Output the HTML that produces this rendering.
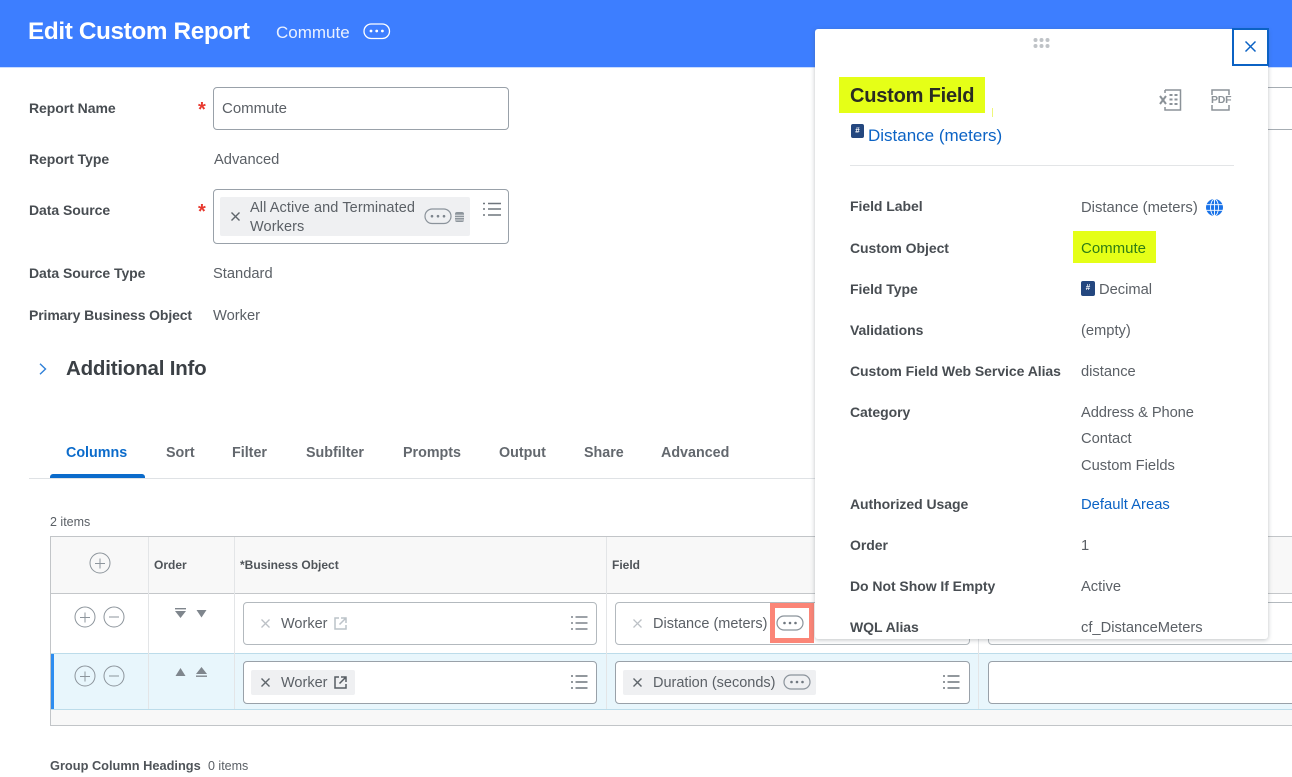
<!DOCTYPE html>
<html><head><meta charset="utf-8"><style>
html,body{margin:0;padding:0;background:#fff}
#p{position:relative;width:1292px;height:777px;overflow:hidden;background:#fff;font-family:"Liberation Sans",sans-serif;color:#555a60;font-size:15px;filter:blur(.3px)}
.t{position:absolute;white-space:nowrap;line-height:20px;height:20px;margin-top:1px}
.l{font-weight:700;color:#484d52;font-size:14px;letter-spacing:-.05px}
.v{color:#5b6066;font-size:14.700px;margin-top:2px}
.b{position:absolute;box-sizing:border-box;background:#fff;border:1.500px solid #99a1a9;border-radius:4px}
.a{position:absolute;box-sizing:border-box}
svg{position:absolute;overflow:visible}
.th{font-weight:700;font-size:12px;color:#4f5459}
.tab{font-weight:700;font-size:14.300px;color:#63686e}
</style></head><body><div id="p">

<div class="a" style="left:0;top:0;width:1292px;height:68px;background:#3d7eff;border-bottom:1px solid #c9dcff"></div>
<div class="t" style="left:28px;top:31px;margin-top:-9px;font-size:24.300px;font-weight:700;color:#fff;letter-spacing:-.36px">Edit Custom Report</div>
<div class="t" style="left:276px;top:22px;font-size:17px;color:#eaf1ff">Commute</div>
<svg style="left:363px;top:23px" width="28" height="17" fill="none"><rect x="1" y="1" width="25.500" height="14.500" rx="7.200" stroke="#fff" stroke-width="1.300"/><circle cx="8" cy="8" r="1.400" fill="#fff"/><circle cx="13.700" cy="8" r="1.400" fill="#fff"/><circle cx="19.400" cy="8" r="1.400" fill="#fff"/></svg>

<div class="t l" style="left:29px;top:97px">Report Name</div>
<div class="t" style="left:198px;top:99px;color:#e8392f;font-size:20px;font-weight:700">*</div>
<div class="b" style="left:213px;top:87px;width:296px;height:43px"></div>
<div class="t v" style="left:222px;top:98px;font-size:15px;margin-top:1px">Commute</div>
<div class="t l" style="left:29px;top:148px">Report Type</div>
<div class="t v" style="left:214px;top:149px;margin-top:1px">Advanced</div>

<div class="t l" style="left:29px;top:199px">Data Source</div>
<div class="t" style="left:198px;top:201px;color:#e8392f;font-size:20px;font-weight:700">*</div>
<div class="b" style="left:213px;top:189px;width:296px;height:55px"></div>
<div class="a" style="left:220px;top:197px;width:250px;height:39px;background:#eff0f2;border-radius:2px"></div>
<svg style="left:231px;top:212px" width="9" height="9" stroke="#5f656b" stroke-width="1.400"><path d="M.5.5l8 8M8.500.5l-8 8"/></svg>
<div class="t v" style="left:250px;top:196px;font-size:14.500px;letter-spacing:.1px">All Active and Terminated</div>
<div class="t v" style="left:250px;top:215px;font-size:14.500px;letter-spacing:.1px">Workers</div>
<svg style="left:424px;top:208px" width="28" height="17" fill="none"><rect x="1" y="1" width="26" height="14.500" rx="7.200" stroke="#8b939b" stroke-width="1.200"/><circle cx="8" cy="8.200" r="1.300" fill="#7c848c"/><circle cx="14" cy="8.200" r="1.300" fill="#7c848c"/><circle cx="20" cy="8.200" r="1.300" fill="#7c848c"/></svg>
<svg style="left:455px;top:212px" width="9" height="10"><rect width="9" height="10" rx="2" fill="#8d959c"/><path d="M0 3.200h9M0 5.600h9M0 8h9" stroke="#eff0f2" stroke-width=".8"/></svg>
<svg style="left:483px;top:202px" width="18" height="15" stroke="#6f767d" stroke-width="1.500"><path d="M5 1.500h13M5 7h13M5 13h13M0 1.500h2M0 7h2M0 13h2"/></svg>

<div class="t l" style="left:29px;top:262px">Data Source Type</div>
<div class="t v" style="left:213px;top:263px;margin-top:1px">Standard</div>
<div class="t l" style="left:29px;top:304px;letter-spacing:-.12px">Primary Business Object</div>
<div class="t v" style="left:213px;top:304px">Worker</div>

<svg style="left:39px;top:363px" width="8" height="12" fill="none" stroke="#2f80d8" stroke-width="1.400"><path d="M1 .8L6.500 6 1 11.200"/></svg>
<div class="t" style="left:66px;top:358px;font-size:20.500px;font-weight:700;color:#3b4045;letter-spacing:-.2px">Additional Info</div>

<div class="t tab" style="left:66px;top:442px;color:#0b6bcb">Columns</div>
<div class="t tab" style="left:166px;top:442px">Sort</div>
<div class="t tab" style="left:232px;top:442px">Filter</div>
<div class="t tab" style="left:306px;top:442px">Subfilter</div>
<div class="t tab" style="left:403px;top:442px">Prompts</div>
<div class="t tab" style="left:499px;top:442px">Output</div>
<div class="t tab" style="left:584px;top:442px">Share</div>
<div class="t tab" style="left:661px;top:442px">Advanced</div>
<div class="a" style="left:29px;top:478px;width:790px;height:1px;background:#dfe2e5"></div>
<div class="a" style="left:50px;top:474px;width:95px;height:4px;background:#0b6bcb;border-radius:3px 3px 0 0"></div>

<div class="t" style="left:50px;top:511px;font-size:12.500px;color:#5b6066">2 items</div>

<!-- table -->
<div class="a" style="left:50px;top:536px;width:1250px;height:190px;background:#f8f8f8;border:1px solid #c2c5c8;border-right:0"></div>
<div class="a" style="left:51px;top:593px;width:1241px;height:1px;background:#c4c7ca"></div>
<div class="a" style="left:51px;top:594px;width:1241px;height:60px;background:#fff"></div>
<div class="a" style="left:51px;top:653px;width:1241px;height:57px;background:#e8f6fc;border-top:1px solid #bcdcea;border-bottom:1px solid #bcdcea"></div>
<div class="a" style="left:51px;top:654px;width:3px;height:55px;background:#2d8df0"></div>
<div class="a" style="left:148px;top:537px;width:1px;height:172px;background:#e3e5e7"></div>
<div class="a" style="left:234px;top:537px;width:1px;height:172px;background:#e3e5e7"></div>
<div class="a" style="left:606px;top:537px;width:1px;height:172px;background:#e3e5e7"></div>
<div class="a" style="left:978px;top:594px;width:1px;height:115px;background:#e3e5e7"></div>

<div class="t th" style="left:154px;top:554px">Order</div>
<div class="t th" style="left:240px;top:554px">*Business Object</div>
<div class="t th" style="left:612px;top:554px">Field</div>

<svg style="left:89px;top:552px" width="22" height="22" fill="none" stroke="#8d959c" stroke-width="1"><circle cx="11" cy="11" r="10"/><path d="M11 6.500v10M6 11.500h10"/></svg>
<svg style="left:74px;top:606px" width="22" height="22" fill="none" stroke="#8d959c" stroke-width="1"><circle cx="11" cy="11" r="10"/><path d="M11 6.500v10M6 11.500h10"/></svg>
<svg style="left:103px;top:606px" width="22" height="22" fill="none" stroke="#8d959c" stroke-width="1"><circle cx="11" cy="11" r="10"/><path d="M6 11h10"/></svg>
<svg style="left:74px;top:665px" width="22" height="22" fill="none" stroke="#8d959c" stroke-width="1"><circle cx="11" cy="11" r="10"/><path d="M11 6.500v10M6 11.500h10"/></svg>
<svg style="left:103px;top:665px" width="22" height="22" fill="none" stroke="#8d959c" stroke-width="1"><circle cx="11" cy="11" r="10"/><path d="M6 11h10"/></svg>

<svg style="left:175px;top:608px" width="12" height="12" fill="#7f868d"><rect width="11" height="1.400"/><path d="M0 3h11L5.500 10z"/></svg>
<svg style="left:196px;top:609px" width="12" height="10" fill="#7f868d"><path d="M.5 1h10L5.500 8.500z"/></svg>
<svg style="left:175px;top:667px" width="12" height="10" fill="#7f868d"><path d="M.5 9h10L5.500 1z"/></svg>
<svg style="left:196px;top:666px" width="12" height="12" fill="#7f868d"><path d="M0 8h11L5.500 1z"/><rect y="9.500" width="11" height="1.400"/></svg>

<!-- row 1 inputs -->
<div class="b" style="left:243px;top:602px;width:354px;height:43px;border-color:#b3b9be"></div>
<svg style="left:261px;top:619px" width="9" height="9" stroke="#bcc1c6" stroke-width="1.300"><path d="M.5.5l8 8M8.500.5l-8 8"/></svg>
<div class="t v" style="left:281px;top:612px;font-size:14.500px">Worker</div>
<svg style="left:334px;top:617px" width="13" height="13" fill="none" stroke="#bcc3c9" stroke-width="1.500"><path d="M5 1H1v11h11V8M7 1h5v5M12 1L5.500 7.500"/></svg>
<svg style="left:571px;top:616px" width="17" height="14" stroke="#7d848b" stroke-width="1.400"><path d="M4.500 1h12M4.500 7h12M4.500 13h12M0 1h2M0 7h2M0 13h2"/></svg>

<div class="b" style="left:615px;top:602px;width:355px;height:43px;border-color:#b3b9be"></div>
<svg style="left:633px;top:619px" width="9" height="9" stroke="#bcc1c6" stroke-width="1.300"><path d="M.5.5l8 8M8.500.5l-8 8"/></svg>
<div class="t v" style="left:653px;top:612px;font-size:14.500px">Distance (meters)</div>
<div class="a" style="left:770px;top:603px;width:44px;height:40px;border:5px solid #fb8577;background:#fff"></div>
<svg style="left:776px;top:615px" width="28" height="17" fill="none"><rect x="1" y="1" width="26" height="14" rx="7" stroke="#8b939b" stroke-width="1.200"/><circle cx="8.500" cy="8" r="1.300" fill="#6f777f"/><circle cx="14" cy="8" r="1.300" fill="#6f777f"/><circle cx="19.500" cy="8" r="1.300" fill="#6f777f"/></svg>

<div class="b" style="left:988px;top:602px;width:320px;height:43px;border-color:#b3b9be"></div>

<!-- row 2 inputs -->
<div class="b" style="left:243px;top:661px;width:354px;height:43px"></div>
<div class="a" style="left:251px;top:670px;width:104px;height:25px;background:#eff0f2;border-radius:2px"></div>
<svg style="left:261px;top:678px" width="9" height="9" stroke="#5f656b" stroke-width="1.400"><path d="M.5.5l8 8M8.500.5l-8 8"/></svg>
<div class="t v" style="left:281px;top:671px;font-size:14.500px">Worker</div>
<svg style="left:334px;top:676px" width="13" height="13" fill="none" stroke="#565c62" stroke-width="1.500"><path d="M5 1H1v11h11V8M7 1h5v5M12 1L5.500 7.500"/></svg>
<svg style="left:571px;top:675px" width="17" height="14" stroke="#6f767d" stroke-width="1.400"><path d="M4.500 1h12M4.500 7h12M4.500 13h12M0 1h2M0 7h2M0 13h2"/></svg>

<div class="b" style="left:615px;top:661px;width:355px;height:43px"></div>
<div class="a" style="left:623px;top:670px;width:193px;height:25px;background:#eff0f2;border-radius:2px"></div>
<svg style="left:633px;top:678px" width="9" height="9" stroke="#5f656b" stroke-width="1.400"><path d="M.5.5l8 8M8.500.5l-8 8"/></svg>
<div class="t v" style="left:653px;top:671px;font-size:14.500px">Duration (seconds)</div>
<svg style="left:783px;top:674px" width="28" height="17" fill="none"><rect x="1" y="1" width="26" height="14" rx="7" stroke="#8b939b" stroke-width="1.200"/><circle cx="8.500" cy="8" r="1.300" fill="#6f777f"/><circle cx="14" cy="8" r="1.300" fill="#6f777f"/><circle cx="19.500" cy="8" r="1.300" fill="#6f777f"/></svg>
<svg style="left:943px;top:675px" width="17" height="14" stroke="#6f767d" stroke-width="1.400"><path d="M4.500 1h12M4.500 7h12M4.500 13h12M0 1h2M0 7h2M0 13h2"/></svg>
<div class="b" style="left:988px;top:661px;width:320px;height:43px"></div>

<div class="t" style="left:50px;top:755px;font-size:12.800px;font-weight:700;color:#4f5459">Group Column Headings</div>
<div class="t" style="left:208px;top:755px;font-size:12.500px;color:#5b6066">0 items</div>

<!-- behind-panel right side lines -->
<div class="a" style="left:1268px;top:87px;width:24px;height:43px;background:#fff;border-top:1.500px solid #a6adb3;border-bottom:1.500px solid #a6adb3"></div>

<!-- panel -->
<div class="a" style="left:815px;top:29px;width:453px;height:610px;background:#fff;border-radius:3px;box-shadow:0 1px 5px rgba(70,80,90,.35);overflow:hidden">
</div>
<svg style="left:1033px;top:38px" width="18" height="10" fill="#bfc3c7"><circle cx="2.500" cy="2" r="2"/><circle cx="8.500" cy="2" r="2"/><circle cx="14.500" cy="2" r="2"/><circle cx="2.500" cy="8" r="2"/><circle cx="8.500" cy="8" r="2"/><circle cx="14.500" cy="8" r="2"/></svg>
<div class="a" style="left:1232px;top:28px;width:37px;height:38px;background:#fff;border:2px solid #0b62c4"></div>
<svg style="left:1245px;top:41px" width="11" height="11" stroke="#0b62c4" stroke-width="1.500"><path d="M.5.5l10 10M10.500.5l-10 10"/></svg>

<div class="a" style="left:839px;top:77px;width:146px;height:36px;background:#e5ff17"></div>
<div class="a" style="left:992px;top:108px;width:1px;height:9px;background:#eef77a"></div>
<div class="t" style="left:850px;top:85px;font-size:20px;font-weight:700;color:#2a2c22;letter-spacing:-.2px">Custom Field</div>
<svg style="left:1159px;top:89px" width="23" height="22" fill="none" stroke="#8b9298" stroke-width="1.500"><path d="M6 1h15.500v20H6v-3M6 4V1"/><path d="M10.500 6h3M15.500 6h3M10.500 10.500h3M15.500 10.500h3M10.500 15h3M15.500 15h3" stroke-width="2"/><path d="M1 7l6 8M7 7l-6 8" stroke-width="2"/></svg>
<svg style="left:1210px;top:89px" width="22" height="22" fill="none" stroke="#8b9298" stroke-width="1.500"><path d="M2 6V1h17v5M2 16v5h17v-5"/></svg>
<div class="t" style="left:1211px;top:89px;font-size:10.500px;font-weight:700;color:#8b9298;letter-spacing:-.2px">PDF</div>

<div class="a" style="left:851px;top:124px;width:13px;height:14px;background:#24477f;border-radius:2px;color:#fff;font-size:8px;font-weight:700;line-height:13px;text-align:center">#</div>
<div class="t" style="left:868px;top:125px;font-size:17px;color:#0b63c5">Distance (meters)</div>
<div class="a" style="left:850px;top:165px;width:384px;height:1px;background:#e3e5e7"></div>

<div class="t l" style="left:850px;top:195px">Field Label</div>
<div class="t v" style="left:1081px;top:196px;font-size:14.800px">Distance (meters)</div>
<svg style="left:1206px;top:199px" width="17" height="17" fill="none" stroke="#fff" stroke-width=".9"><circle cx="8.500" cy="8.500" r="8.500" fill="#1a73e8" stroke="none"/><ellipse cx="8.500" cy="8.500" rx="4" ry="8.200"/><path d="M8.500 0v17M.5 5.700h16M.5 11.300h16"/></svg>

<div class="t l" style="left:850px;top:237px">Custom Object</div>
<div class="a" style="left:1073px;top:231px;width:83px;height:32px;background:#e5ff17"></div>
<div class="t" style="left:1081px;top:238px;color:#2f7d14;font-size:15px">Commute</div>

<div class="t l" style="left:850px;top:278px">Field Type</div>
<div class="a" style="left:1081px;top:281px;width:14px;height:15px;background:#24477f;border-radius:2px;color:#fff;font-size:8px;font-weight:700;line-height:14px;text-align:center">#</div>
<div class="t v" style="left:1099px;top:278px">Decimal</div>

<div class="t l" style="left:850px;top:319px">Validations</div>
<div class="t v" style="left:1081px;top:319px">(empty)</div>
<div class="t l" style="left:850px;top:360px">Custom Field Web Service Alias</div>
<div class="t v" style="left:1081px;top:360px">distance</div>
<div class="t l" style="left:850px;top:401px">Category</div>
<div class="t v" style="left:1081px;top:401px;letter-spacing:-.1px">Address &amp; Phone</div>
<div class="t v" style="left:1081px;top:427px">Contact</div>
<div class="t v" style="left:1081px;top:454px">Custom Fields</div>
<div class="t l" style="left:850px;top:493px">Authorized Usage</div>
<div class="t" style="left:1081px;top:494px;color:#0b63c5;font-size:14.800px">Default Areas</div>
<div class="t l" style="left:850px;top:534px">Order</div>
<div class="t v" style="left:1081px;top:534px">1</div>
<div class="t l" style="left:850px;top:575px">Do Not Show If Empty</div>
<div class="t v" style="left:1081px;top:575px">Active</div>
<div class="t l" style="left:850px;top:616px">WQL Alias</div>
<div class="t v" style="left:1081px;top:616px">cf_DistanceMeters</div>

</div></body></html>
